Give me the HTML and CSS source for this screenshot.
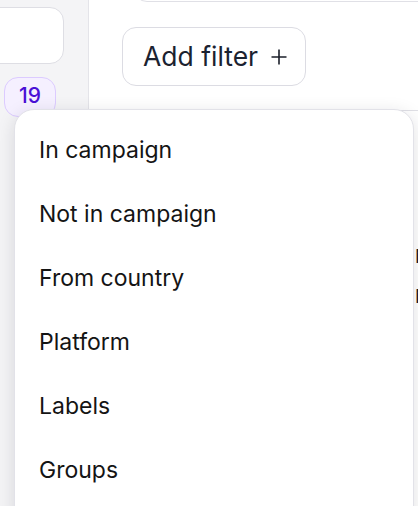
FILE: index.html
```html
<!DOCTYPE html>
<html>
<head>
<meta charset="utf-8">
<link rel="stylesheet" href="styles.css">
</head>
<body>
<div class="app">
  <aside class="sidebar">
    <div class="side-card"></div>
    <span class="badge">19</span>
  </aside>
  <main class="main">
    <div class="top-field"></div>
    <button class="add-filter">
      <span class="add-label">Add filter</span>
      <svg class="plus" width="16" height="16" viewBox="0 0 16 16"><path d="M8 0.5V15.5M0.5 8H15.5" stroke="#1b1f2a" stroke-width="1.6" fill="none"/></svg>
    </button>
    <div class="back-card">
      <div class="back-row">Name</div>
      <div class="back-row">Name</div>
    </div>
  </main>
</div>
<div class="menu">
  <div class="menu-item">In campaign</div>
  <div class="menu-item">Not in campaign</div>
  <div class="menu-item">From country</div>
  <div class="menu-item">Platform</div>
  <div class="menu-item">Labels</div>
  <div class="menu-item">Groups</div>
</div>
</body>
</html>
```
FILE: styles.css
```css
html, body {
  margin: 0;
  padding: 0;
  width: 418px;
  height: 506px;
  overflow: hidden;
  background: #ffffff;
  font-family: Inter, "Noto Sans", sans-serif;
}

.app {
  display: flex;
  height: 506px;
}

.sidebar {
  width: 88px;
  flex: none;
  background: #f4f4f6;
  border-right: 1px solid #e4e4e9;
  display: flex;
  flex-direction: column;
  align-items: flex-start;
}

.side-card {
  margin-top: 7px;
  margin-left: -24px;
  width: 88px;
  height: 57px;
  box-sizing: border-box;
  background: #ffffff;
  border: 1.5px solid #dedee4;
  border-radius: 14px;
}

.badge {
  margin-top: 13px;
  margin-left: 4px;
  width: 52px;
  height: 40px;
  box-sizing: border-box;
  border: 1.5px solid #dccbff;
  background: #f5f0ff;
  border-radius: 14px;
  color: #4a10d6;
  font-size: 21px;
  font-weight: 500;
  display: flex;
  justify-content: center;
  padding-top: 6px;
  line-height: 1.1;
}

.main {
  flex: 1;
  display: flex;
  flex-direction: column;
  align-items: flex-start;
  padding-left: 33px;
  min-width: 0;
}

.top-field {
  margin-top: -60px;
  margin-left: 11px;
  width: 340px;
  height: 62px;
  box-sizing: border-box;
  border: 1.5px solid #e0e0e6;
  border-radius: 14px;
  flex: none;
}

.add-filter {
  margin-top: 25px;
  height: 59px;
  width: 184px;
  box-sizing: border-box;
  border: 1.5px solid #dcdce3;
  border-radius: 14px;
  background: #ffffff;
  display: flex;
  align-items: center;
  padding: 0 0 0 20px;
  gap: 13px;
  font-family: Inter, "Noto Sans", sans-serif;
  font-size: 26.5px;
  color: #1b2230;
  flex: none;
}

.add-label {
  line-height: 1;
  padding-bottom: 1px;
}

.plus {
  flex: none;
  margin-top: 1px;
}

.back-card {
  margin-top: 24px;
  width: 420px;
  height: 400px;
  box-sizing: border-box;
  border-top: 1.5px solid #e0e0e6;
  border-left: 1.5px solid #e0e0e6;
  border-radius: 14px 0 0 0;
  padding-left: 292px;
  padding-top: 126px;
  flex: none;
}

.back-row {
  font-size: 18px;
  line-height: 40px;
  color: #1b1f2a;
}

.menu {
  position: absolute;
  left: 14px;
  top: 109px;
  width: 400px;
  height: 420px;
  box-sizing: border-box;
  background: #ffffff;
  border: 1px solid #e2e2e8;
  border-radius: 20px;
  box-shadow: 0 4px 18px rgba(20, 20, 40, 0.13);
  padding-top: 8px;
}

.menu-item {
  height: 64px;
  line-height: 64px;
  padding-left: 24px;
  font-size: 23px;
  color: #141414;
  white-space: nowrap;
}
```
